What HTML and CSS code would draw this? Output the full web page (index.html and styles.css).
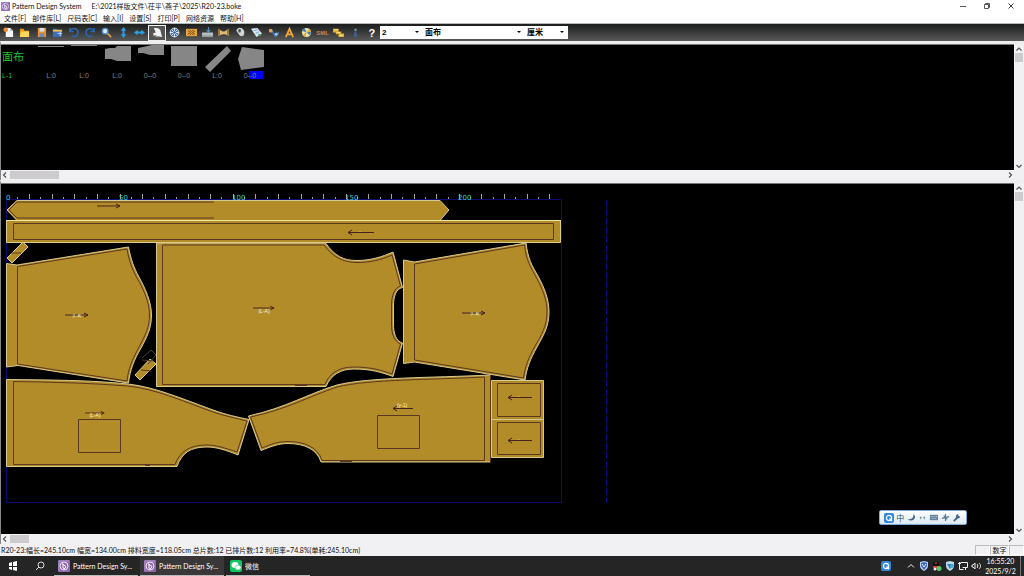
FILE: index.html
```html
<!DOCTYPE html>
<html lang="zh-CN">
<head>
<meta charset="utf-8">
<title>Pattern Design System</title>
<link rel="stylesheet" href="styles.css">
</head>
<body>
<svg class="defs" width="0" height="0" aria-hidden="true">
  <defs>
    <symbol id="app" viewBox="0 0 12 12"><rect width="12" height="12" rx="1" fill="#8d68ad"/><path d="M1 11V1h10" fill="none" stroke="#b594cf"/><circle cx="6" cy="6" r="4" fill="none" stroke="#efe2f8"/><path d="M4 3.500l4 3-2 3M5 4v4l2 1" fill="none" stroke="#fff"/></symbol>
    <symbol id="up" viewBox="0 0 8 8"><path d="M1.500 5.500L4 3l2.500 2.500" fill="none" stroke="#555" stroke-width="1.200"/></symbol>
    <symbol id="down" viewBox="0 0 8 8"><path d="M1.500 3L4 5.500 6.500 3" fill="none" stroke="#555" stroke-width="1.200"/></symbol>
    <symbol id="left" viewBox="0 0 8 8"><path d="M5 1.500L2.500 4 5 6.500" fill="none" stroke="#555" stroke-width="1.200"/></symbol>
    <symbol id="right" viewBox="0 0 8 8"><path d="M3 1.500L5.500 4 3 6.500" fill="none" stroke="#555" stroke-width="1.200"/></symbol>
    <symbol id="arrow" viewBox="0 0 24 6" overflow="visible"><path d="M0 3h23M19 1l4 2-4 2" fill="none" stroke="#45221f"/></symbol>
    <symbol id="q" viewBox="0 0 10 10"><rect width="10" height="10" rx="2" fill="#2f86dc"/><circle cx="5" cy="5" r="2.600" fill="none" stroke="#fff" stroke-width="1.300"/><path d="M5.500 5.500l2.500 2.500" stroke="#fff" stroke-width="1.300"/></symbol>
  </defs>
</svg>
<div class="window">
  <header class="titlebar">
    <svg class="app-icon"><use href="#app"/></svg>
    <h1 class="title">Pattern Design System</h1>
    <span class="path">E:\2021样版文件\茌平\燕子\2025\R20-23.boke</span>
    <div class="window-buttons">
      <button aria-label="最小化"><svg viewBox="0 0 8 8"><path d="M1 4.500h6" stroke="#555" fill="none"/></svg></button>
      <button aria-label="还原"><svg viewBox="0 0 8 8"><path d="M1.500 2.500h4v4h-4zM2.500 2V1.500h4v4H6" stroke="#555" fill="none"/></svg></button>
      <button aria-label="关闭"><svg viewBox="0 0 8 8"><path d="M1.500 1.500l5 5M6.500 1.500l-5 5" stroke="#444" fill="none"/></svg></button>
    </div>
  </header>
  <nav class="menu">
    <button>文件[F]</button><button>部件库[L]</button><button>尺码表[C]</button><button>输入[I]</button><button>设置[S]</button><button>打印[P]</button><button>网络资源</button><button>帮助[H]</button>
  </nav>
  <div class="toolbar">
    <div class="tools">
      <button aria-label="新建"><svg viewBox="0 0 12 12"><path d="M3 1h5l3 3v7H3z" fill="#f4f4f4"/><path d="M8 1v3h3z" fill="#aaa"/><circle cx="3" cy="3" r="2.500" fill="#f58b2c"/></svg></button>
      <button aria-label="打开"><svg viewBox="0 0 12 12"><path d="M1 2h4l1 2h5v7H1z" fill="#ef9a13"/><path d="M2 5h9v6H1z" fill="#ffd75a"/></svg></button>
      <button aria-label="保存"><svg viewBox="0 0 12 12"><path d="M2 1h9v10H2z" fill="#ee8e2a"/><path d="M4 1h5v4H4z" fill="#cce2f8"/><path d="M4 7h5v4H4z" fill="#6a8dbf"/></svg></button>
      <button aria-label="另存为"><svg viewBox="0 0 12 12"><path d="M1 2h4l1 1h5v8H1z" fill="#3c6dba"/><path d="M1 3h10v2H1z" fill="#f3be4a"/><path d="M6 7h5M9 5v5" stroke="#c5dcff"/></svg></button>
      <button aria-label="撤销"><svg viewBox="0 0 12 12"><path d="M2 4c3-4 9-2 9 2s-4 5-7 4M2 1v4h4" fill="none" stroke="#2868b8" stroke-width="1.600"/></svg></button>
      <button aria-label="重做"><svg viewBox="0 0 12 12"><path d="M10 4C7 0 1 2 1 6s4 5 7 4M10 1v4H6" fill="none" stroke="#2868b8" stroke-width="1.600"/></svg></button>
      <button aria-label="缩放"><svg viewBox="0 0 12 12"><path d="M6 6l5 5" stroke="#dc9845" stroke-width="2"/><circle cx="4.500" cy="4.500" r="3" fill="#d7eeff" stroke="#538fd0" stroke-width="1.500"/></svg></button>
      <button aria-label="垂直"><svg viewBox="0 0 12 12"><path d="M6 0l3 4H7v4h2l-3 4-3-4h2V4H3z" fill="#27a1e8"/></svg></button>
      <button aria-label="水平"><svg viewBox="0 0 12 12"><path d="M0 6l4-3v2h4V3l4 3-4 3V7H4v2z" fill="#27a1e8"/></svg></button>
      <button class="selected" aria-label="选择" aria-pressed="true"><svg viewBox="0 0 12 12"><path d="M2 1l4 0 3 2 1 4 1 4-5-1-5-2 0-1 3-1z" fill="#f2f2f2"/><path d="M1 9l6 2" stroke="#aaa"/></svg></button>
      <button aria-label="排料"><svg viewBox="0 0 12 12"><circle cx="6" cy="6" r="4.800" fill="#496fa8" stroke="#d5e3f3"/><path d="M6 1v10M1 6h10M3 3l6 6M9 3L3 9" stroke="#e8f2fc"/><circle cx="6" cy="6" r="1.300" fill="#2b5290"/></svg></button>
      <button aria-label="放大范围"><svg viewBox="0 0 12 12"><path d="M0 2h12v8H0z" fill="#eaa43d"/><path d="M2 4l3 2-3 2M10 4L7 6l3 2M4 3l2 2 2-2M4 9l2-2 2 2" stroke="#6d441b" fill="none"/></svg></button>
      <button aria-label="移入"><svg viewBox="0 0 12 12"><path d="M0 6h12v5H0z" fill="#b6bcc0"/><path d="M7 0v6M5 3l2 3 2-3" stroke="#609bd0" fill="none"/><path d="M0 10h12" stroke="#798389"/></svg></button>
      <button aria-label="测量"><svg viewBox="0 0 12 12"><path d="M1 2v8M11 2v8" stroke="#e8b14a"/><path d="M2 3l3 2h2l3-2v6L8 8H5L2 9z" fill="#e0bc78"/></svg></button>
      <button aria-label="卷料"><svg viewBox="0 0 12 12"><path d="M4 1c4-1 7 3 6 6 0 3-3 4-5 2L2 5c-1-2 0-3 2-4z" fill="#d2d4d6"/><ellipse cx="5" cy="4" rx="1.500" ry="2" fill="#555"/></svg></button>
      <button aria-label="纸样"><svg viewBox="0 0 12 12"><path d="M0 2l7-1 5 6-6 4z" fill="#dbe8f5"/><path d="M3 4l4-1M5 7l4-2" stroke="#6c9bd0"/><path d="M8 8l3 1" stroke="#49a36c" stroke-width="2"/></svg></button>
      <button aria-label="曲线"><svg viewBox="0 0 12 12"><path d="M1 3l4 2 3 5 4-4" stroke="#4275bb" stroke-width="2" fill="none"/><circle cx="3" cy="4" r="2" fill="#e0a851"/><circle cx="9" cy="8" r="1.600" fill="#9fc4ed"/></svg></button>
      <button aria-label="文字"><svg viewBox="0 0 12 12"><path d="M2 11L6 2l4 9M3.500 8h5" fill="none" stroke="#efa638" stroke-width="2"/></svg></button>
      <button aria-label="颜色"><svg viewBox="0 0 12 12"><circle cx="6" cy="6" r="5" fill="#e8e6a8"/><path d="M6 6L4 1 1 4zM6 6l5-1-1 4z" fill="#4578b9"/><path d="M6 6l3-4 2 3zM6 6l-1 5-3-3z" fill="#e4ad2d"/></svg></button>
      <button class="sml">SML</button>
      <button aria-label="层次"><svg viewBox="0 0 12 12"><path d="M0 2h6v3h3v2h3v4H6V8H3V6H0z" fill="#dcad31"/><path d="M1 3h5M4 6h4M7 9h4" stroke="#ffeb94"/></svg></button>
      <button aria-label="信息"><svg viewBox="0 0 12 12"><circle cx="6" cy="3" r="1.500" fill="#7085a0"/><path d="M5 5h2l1 6H4z" fill="#405f8a"/></svg></button>
      <button class="help" aria-label="帮助">?</button>
    </div>
    <div class="combos">
      <label class="combo"><select aria-label="编号"><option>2</option></select></label>
      <label class="combo wide"><select aria-label="布料"><option>面布</option></select></label>
      <label class="combo"><select aria-label="单位"><option>厘米</option></select></label>
    </div>
  </div>
  <section class="pane pieces" aria-label="纸样列表">
    <div class="canvas">
      <svg viewBox="1 45 300 50" width="300" height="50">
        <g fill="#868686">
          <path d="M38 46h26v1H38zM71 45h26v1H71z"/>
          <path d="M105 49l5-1h5l2-2h14v15h-14l-6-2h-6zM138 48l5-1 9-2h12v10h-14l-7-2h-5zM171 46h26v20h-26zM227 46l4 5-21 21-5-5zM242 47l22 3v17l-23 3-3-11z"/>
        </g>
        <path d="M249 71h14v8h-14z" fill="#0000ff"/>
        <g class="green"><text class="fabric" x="2" y="61">面布</text><text class="tag" x="2" y="78">L-1</text></g>
        <g class="tag gray"><text x="51" y="78">L:0</text><text x="84" y="78">L:0</text><text x="117" y="78">L:0</text><text x="150" y="78">0--0</text><text x="184" y="78">0--0</text><text x="217" y="78">L:0</text><text x="250" y="78">0--0</text></g>
      </svg>
    </div>
    <div class="vscroll"><button aria-label="向上"><svg><use href="#up"/></svg></button><div class="thumb"></div><button aria-label="向下"><svg><use href="#down"/></svg></button></div>
    <div class="hscroll"><button aria-label="向左"><svg><use href="#left"/></svg></button><div class="thumb long"></div><button aria-label="向右"><svg><use href="#right"/></svg></button></div>
  </section>
  <section class="pane marker" aria-label="排料图">
    <div class="canvas">
      <svg viewBox="1 184 620 330" width="620" height="330">
        <path d="M29.500 194v6M52.500 194v6M74.500 194v6M97.500 194v6M120.500 194v6M142.500 194v6M165.500 194v6M188.500 194v6M210.500 194v6M233.500 194v6M255.500 194v6M278.500 194v6M301.500 194v6M323.500 194v6M346.500 194v6M368.500 194v6M391.500 194v6M414.500 194v6M436.500 194v6M459.500 194v6M481.500 194v6M504.500 194v6M527.500 194v6M549.500 194v6M17.500 197v3M40.500 197v3M63.500 197v3M86.500 197v3M108.500 197v3M131.500 197v3M153.500 197v3M176.500 197v3M199.500 197v3M221.500 197v3M244.500 197v3M267.500 197v3M289.500 197v3M312.500 197v3M335.500 197v3M357.500 197v3M380.500 197v3M402.500 197v3M425.500 197v3M448.500 197v3M470.500 197v3M493.500 197v3M515.500 197v3M538.500 197v3" stroke="#a8a890"/>
        <path d="M6.500 199.500h555v303H6.500z" fill="none" stroke="#0c0c74"/>
        <g class="ruler"><text x="6" y="200">0</text><text x="119" y="200">50</text><text x="232" y="200">100</text><text x="345" y="200">150</text><text x="458" y="200">200</text></g>
        <path d="M606.500 200v303" stroke="#10108a" stroke-dasharray="7 2"/>
        <g class="piece">
          <path d="M17 200.500H440L449 210 440 220.500H17L7 210z"/>
          <path d="M6.500 220.500h554v22H6.500z"/>
          <path d="M23 242l5 5-16 16-5-5z"/>
          <path d="M6.500 263.500L17 265 128.500 247C131 260 134 268 139 277 145 288 151.500 302 151.500 315 151.500 328 147 337 141 348 134 360 130 370 128.500 383L18 365.500 6.500 367z"/>
          <path d="M150 359l6 5-16 16-5-5z"/>
          <path d="M156.500 243H325.500C335 256 343 260.500 357 260.500 370 260.500 382 257 393 252L402.500 287.500C396 289 393.500 296 393.500 306V324C393.500 334 396 341 402.500 343L393 376.500C381 372 370 369 354 369 340 369 331 375 326 386.500H156.500z"/>
          <path d="M403.500 260L414.500 262 526 243C528 259 532 266 538 276 545 289 549 300 549 312 549 327 543 336 537 347 530 360 527 367 525 380L414.500 362 403.500 363.500z"/>
          <path d="M6.500 379.500C50 380 90 380 128 384 155 387 180 398 213 410 227 415 237 417 249 419.500L238 455C226 450 216 447 207 447 190 447 182 453 177 466.500H6.500z"/>
          <path d="M248.500 416C285 408 310 393 337 385 370 377 430 378 490.500 375V462H321C317 449 304 443.500 288 443.500 278 443.500 270 447 261 450.500z"/>
          <path d="M491.500 380.500h52v39h-52zM491.500 419.500h52v38h-52z"/>
        </g>
        <path d="M6 220.500h555" stroke="#efe9a0"/>
        <g class="seam">
          <path d="M214 202H17L9 210l8 8h197M13.500 223.500h540v16h-540zM11 253h10"/>
          <path d="M17.500 266.500L127 249C129 261 132 269 137 278 144 290 149.500 303 149.500 315 149.500 327 145 336 139 347 132 360 128 370 127 381L17.500 364z"/>
          <path d="M162.500 245H324C333 257 343 262.500 357 262.500 370 262.500 381 260 392 255L400.500 286C394 288 391.500 296 391.500 306V324C391.500 334 394 341 400.500 344L392 374C381 370 370 367 354 367 338 367 329 374 325 384.500H162.500z"/>
          <path d="M414.500 264L524.500 245C526 260 531 268 536 277 543 290 547 300 547 312 547 326 541 336 535 346 528 359 525 367 523.500 378L414.500 360z"/>
          <path d="M13.500 381.500C50 382 90 383 128 386 155 389 180 400 213 412 225 416 235 418 247 421L237 452C225 448 216 445 207 445 190 445 180 451 175 464.500H13.500z"/>
          <path d="M250.500 417C285 410 310 396 337 387 370 379 430 380 484.500 377V460.500H322C318 447 304 441.500 288 441.500 278 441.500 271 444 262 448z"/>
          <path d="M490.500 375v87M497.500 383.500h43v33h-43zM497.500 422.500h43v32h-43zM78.500 419.500h42v33h-42zM377.500 415.500h42v33h-42zM142 360l12 1M141 370l10 1M145 465.500h5M340 461.500h12M295 385.500h12"/>
        </g>
        <path d="M142 358l9-8 5 5-8 9" fill="none" stroke="#46433a"/>
        <use href="#arrow" x="95" y="203" width="28" height="6"/>
        <use href="#arrow" x="65" y="312" width="24" height="6"/>
        <use href="#arrow" x="253" y="305" width="22" height="6"/>
        <use href="#arrow" x="462" y="310" width="24" height="6"/>
        <use href="#arrow" x="85" y="410" width="20" height="6"/>
        <g fill="none" stroke="#45221f"><path d="M374 232.500h-26M352 230l-4 2.500 4 2.500M413 408.500h-20M397 406l-4 2.500 4 2.500M532 397.500h-24M512 395l-4 2.500 4 2.500M532 440.500h-24M512 438l-4 2.500 4 2.500"/></g>
        <g class="note"><text x="264" y="313">(L-A)</text><text x="95" y="417">(L-A)</text><text x="402" y="407">(γ-1)</text></g>
        <g class="note small"><text x="77" y="317">(L-A)</text><text x="475" y="315">(L-A)</text><text x="360" y="232">--</text><text x="519" y="397">--</text><text x="519" y="440">--</text></g>
      </svg>
    </div>
    <div class="vscroll"><button aria-label="向上"><svg><use href="#up"/></svg></button><div class="thumb"></div><button aria-label="向下"><svg><use href="#down"/></svg></button></div>
    <div class="hscroll"><button aria-label="向左"><svg><use href="#left"/></svg></button><div class="thumb"></div><button aria-label="向右"><svg><use href="#right"/></svg></button></div>
    <div class="ime">
      <svg viewBox="0 0 10 10"><use href="#q"/></svg>
      <span>中</span>
      <svg viewBox="0 0 10 10"><path d="M7 1c1 4-2 6-6 6 3 3 8 1 8-3 0-1-1-2-2-3z" fill="#476785"/></svg>
      <svg viewBox="0 0 10 10"><path d="M2 5h2M3 4v3M7 4v3M6 5h2" stroke="#718ba2" fill="none"/></svg>
      <svg viewBox="0 0 10 10"><path d="M1 2h9v6H1z" fill="#66839c"/><path d="M2 4h7M3 6h5" stroke="#d2dde5" stroke-dasharray="1 1"/></svg>
      <svg viewBox="0 0 10 10"><path d="M5 1v8M1 6l8-2M3 3l4 4" stroke="#587992" stroke-width="1.300"/></svg>
      <svg viewBox="0 0 10 10"><path d="M2 9l4-4" stroke="#476785" stroke-width="2"/><path d="M5 2l2-1v2l2 1-1 2-4-1z" fill="#476785"/></svg>
    </div>
  </section>
  <footer class="status">
    <span class="summary">R20-23:幅长=245.10cm 幅宽=134.00cm 排料宽度=118.05cm 总片数:12 已排片数:12 利用率=74.8%(单耗:245.10cm)</span>
    <span class="cell"></span><span class="cell label">数字</span><span class="cell"></span>
  </footer>
  <div class="taskbar">
    <button class="start" aria-label="开始"><svg viewBox="0 0 10 10"><path d="M1 2l3-1v4H1zM5 1l4-1v5H5zM1 6h3v3L1 8zM5 6h4v4L5 9z" fill="#fff"/></svg></button>
    <button class="start" aria-label="搜索"><svg viewBox="0 0 10 10"><circle cx="6" cy="4" r="3" fill="none" stroke="#ddd"/><path d="M4 6L1 9" stroke="#ddd"/></svg></button>
    <button class="task"><svg><use href="#app"/></svg>Pattern Design Sy...</button>
    <button class="task active"><svg><use href="#app"/></svg>Pattern Design Sy...</button>
    <button class="task"><svg viewBox="0 0 12 12"><rect width="12" height="12" rx="2" fill="#12c565"/><ellipse cx="5" cy="5" rx="3.500" ry="3" fill="#fff"/><ellipse cx="8" cy="7.500" rx="3" ry="2.500" fill="#fff" stroke="#12c565" stroke-width=".5"/></svg>微信</button>
    <div class="tray">
      <svg class="tray-q" viewBox="0 0 10 10"><use href="#q"/></svg>
      <svg viewBox="0 0 10 10"><path d="M2 6.500l3-3 3 3" stroke="#eee" fill="none"/></svg>
      <svg viewBox="0 0 10 10"><path d="M1 1l4-1 4 1v4c0 2-2 4-4 5-2-1-4-3-4-5z" fill="#b9cdf5"/><path d="M2 2l3-1 3 1v3L5 9 2 5z" fill="#3f68c8"/><path d="M3 3l2 3 2-3" stroke="#dce7ff" fill="none"/></svg>
      <svg viewBox="0 0 10 10"><ellipse cx="4" cy="5" rx="3" ry="4.500" fill="#180f0f"/><circle cx="4" cy="2" r="1" fill="#a33"/><path d="M1 5h6v2H1z" fill="#d63c2e"/><circle cx="7" cy="7.500" r="2.500" fill="#55ca66"/><circle cx="3" cy="8" r="1.500" fill="#eee"/></svg>
      <svg viewBox="0 0 10 10"><path d="M1 1l4-1 4 1v4c0 2-2 4-4 5-2-1-4-3-4-5z" fill="#b9dbea"/><path d="M2 3h6L5 8z" fill="#287eb3"/><circle cx="7" cy="5" r="2" fill="#48a9dc"/></svg>
      <svg viewBox="0 0 10 10"><path d="M2.500 1.500h7v5h-5M1.500 1v7.500h4M0 2.500h3M7.500 6v3" fill="none" stroke="#eee"/></svg>
      <svg viewBox="0 0 10 10"><path d="M1 4h1l2-2v6L2 6H1zM6 3c1 1 1 3 0 4M8 2c2 2 2 4 0 6" fill="none" stroke="#eee"/></svg>
      <time class="clock"><span>16:55:20</span><span>2025/9/2</span></time>
      <button class="desktop" aria-label="显示桌面"></button>
    </div>
  </div>
</div>
</body>
</html>
```
FILE: styles.css
```css
* { box-sizing: border-box; }
body { margin: 0; font: 7px/10px Lato, "Noto Sans CJK SC", sans-serif; color: #111; background: #000; }
button { margin: 0; padding: 0; border: 0; background: none; color: inherit; font: inherit; }
.defs { position: absolute; }
.window { display: flex; flex-direction: column; height: 100vh; min-height: 400px; overflow: hidden; }

.titlebar { display: flex; align-items: center; height: 12px; padding: 0 9px 0 1px; background: #fff; }
.app-icon { width: 9px; height: 9px; margin-right: 2px; }
.title { margin: 0 10px 0 0; font-size: 7px; font-weight: 400; }
.window-buttons { display: flex; gap: 16px; margin-left: auto; }
.window-buttons button, .window-buttons svg { display: block; width: 8px; height: 8px; }
.menu { display: flex; gap: 6px; height: 11px; padding-left: 4px; background: #fff; }
.menu button { white-space: nowrap; }

.toolbar { display: flex; align-items: center; height: 18px; background: linear-gradient(#1b1d1c, #595959); border-top: 1px solid #b5b9b7; }
.tools { display: flex; width: 380px; height: 16px; }
.tools button { display: flex; flex: 1; align-items: center; justify-content: center; min-width: 0; }
.tools svg { width: 11px; height: 11px; }
.tools .selected { border: 1px solid #eee; background: #555; }
.tools .sml { color: #cf8249; font: 700 6px/10px "Liberation Sans", sans-serif; }
.tools .help { color: #fff; font: 700 11px/12px "Liberation Sans", sans-serif; }
.combos { display: flex; }
.combo { position: relative; width: 43px; height: 13px; background: #fff; }
.combo.wide { width: 102px; }
.combo select { display: block; width: 100%; height: 13px; padding: 0 2px; border: 0; appearance: none; background: #fff; color: #000; font: 700 8px/12px "Liberation Sans", "Noto Sans CJK SC", sans-serif; }
.combo::after { content: ""; position: absolute; top: 5px; right: 4px; border: 2px solid transparent; border-top-color: #000; pointer-events: none; }

.pane { position: relative; display: grid; grid-template-columns: 1fr 10px; min-height: 0; border-top: 3px solid #eee; border-left: 1px solid #888; background: #f1f0f2; box-shadow: inset 0 1px #777; }
.pieces { grid-template-rows: 126px 10px; }
.marker { flex: 1; grid-template-rows: 1fr 10px; }
.canvas { min-width: 0; min-height: 0; margin-top: 1px; overflow: hidden; background: #000; }
.canvas svg { display: block; }
.vscroll { display: flex; flex-direction: column; align-items: center; padding-top: 1px; background: #f1f0f2; }
.hscroll { display: flex; align-items: center; grid-column: 1; background: #f1f0f2; }
.vscroll button, .vscroll svg, .hscroll button, .hscroll svg { display: block; width: 8px; height: 8px; }
.vscroll .thumb { width: 8px; height: 9px; background: #cdcbce; }
.hscroll .thumb { width: 19px; height: 8px; margin-left: 1px; background: #cdcbce; }
.hscroll .thumb.long { width: 49px; }
.vscroll button:last-child { margin-top: auto; }
.hscroll button:last-child { margin-left: auto; }

.green { fill: #1cc630; }
.fabric { font-size: 11px; }
.tag { font: 7px "Liberation Sans", sans-serif; }
.gray { fill: #858585; text-anchor: middle; }
.ruler { fill: #36d2d2; font: 7px "DejaVu Sans", sans-serif; }
.piece { fill: #b28c29; stroke: #d8c991; }
.seam { fill: none; stroke: #5b3820; }
.note { fill: #fff4cd; font: 5px "Liberation Sans", sans-serif; text-anchor: middle; }
.note.small { font-size: 4px; }

.ime { position: absolute; right: 57px; bottom: 19px; display: flex; align-items: center; justify-content: space-between; width: 88px; height: 15px; padding: 0 5px 0 4px; border: 1px solid #7fa9d2; border-radius: 2px; background: linear-gradient(#fff, #dce8f1); color: #35536d; font-size: 8px; }
.ime svg { width: 9px; height: 9px; }
.ime svg:first-child { width: 10px; height: 10px; }

.status { display: flex; align-items: center; height: 12px; background: #f1f0f2; }
.summary { flex: 1; padding-left: 1px; white-space: nowrap; overflow: hidden; }
.cell { width: 15px; height: 10px; border: 1px solid #bbb; border-right-color: #fff; border-bottom-color: #fff; }
.cell.label { width: 19px; text-align: center; line-height: 8px; }

.taskbar { display: flex; gap: 2px; height: 20px; background: #252525; color: #fff; }
.start { display: flex; align-items: center; justify-content: center; width: 25px; }
.start svg { width: 10px; height: 10px; }
.task { display: flex; align-items: center; gap: 3px; width: 84px; padding: 0 4px; border-bottom: 1px solid #bbb; white-space: nowrap; overflow: hidden; }
.task.active { background: #3a3739; }
.task svg { flex: none; width: 12px; height: 12px; }
.tray { display: flex; align-items: center; gap: 3px; margin-left: auto; }
.tray svg { width: 10px; height: 10px; }
.tray .tray-q { margin-right: 12px; }
.clock { display: flex; flex-direction: column; align-items: center; width: 33px; }
.desktop { width: 4px; height: 20px; border-left: 1px solid #777; }
```
